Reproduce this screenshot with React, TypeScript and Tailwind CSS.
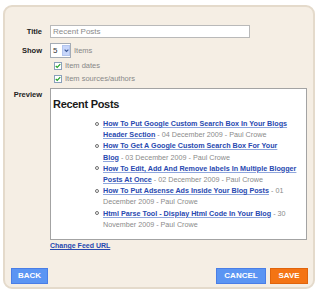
const posts = [
  { line1: 'How To Put Google Custom Search Box In Your Blogs', link2: 'Header Section', rest2: ' - 04 December 2009 - Paul Crowe' },
  { line1: 'How To Get A Google Custom Search Box For Your', link2: 'Blog', rest2: ' - 03 December 2009 - Paul Crowe' },
  { line1: 'How To Edit, Add And Remove labels In Multiple Blogger', link2: 'Posts At Once', rest2: ' - 02 December 2009 - Paul Crowe' },
  { line1: 'How To Put Adsense Ads Inside Your Blog Posts', tail1: ' - 01', rest2: 'December 2009 - Paul Crowe' },
  { line1: 'Html Parse Tool - Display Html Code In Your Blog', tail1: ' - 30', rest2: 'November 2009 - Paul Crowe' },
];

const CheckBox = () => (
  <span className="flex h-[8px] w-[8px] items-center justify-center border border-[#8aa0bb] bg-white">
    <svg viewBox="0 0 8 8" className="h-[6px] w-[6px]">
      <path d="M1 4 L3 6 L7 1.5" fill="none" stroke="#22a22a" strokeWidth="1.6" />
    </svg>
  </span>
);

const linkCls = 'font-bold text-[#2849b0] underline decoration-[#8fa6dc]';

const App = () => {
  return (
    <div className="h-[296px] w-[320px] bg-white pl-[3px] pt-[5px]" style={{ fontFamily: '"Liberation Sans", Arial, sans-serif' }}>
      <div className="flex h-[284px] w-[312px] flex-col rounded-[9px] border-2 border-[#e4dacb] bg-[#f5eee4]">
        {/* Settings form */}
        <div className="mt-[18px] grid grid-cols-[37px_1fr] gap-x-[8px]">
          <div className="flex h-[13px] items-center justify-end text-[7.5px] font-bold text-[#222]">Title</div>
          <div className="flex h-[13px] w-[200px] items-center border border-[#b9b9b9] bg-white pl-[2px] text-[8px] text-[#8a8a8a]">
            Recent Posts
          </div>

          <div className="mt-[5px] flex h-[15px] items-start justify-end pt-[2px] text-[7.5px] font-bold text-[#222]">Show</div>
          <div className="mt-[5px] flex h-[15px] items-center gap-[3px]">
            <div className="flex h-[15px] w-[21px] items-center border border-[#a5acb5] bg-white">
              <span className="w-[11px] pl-[2px] text-[8px] text-[#333]">5</span>
              <span className="flex h-[11px] w-[8px] items-center justify-center border border-[#b3c5ee] bg-[#c7d6fa]">
                <svg viewBox="0 0 8 8" className="h-[5px] w-[5px]">
                  <path d="M1 2.5 L4 5.5 L7 2.5" fill="none" stroke="#3e5a98" strokeWidth="1.8" />
                </svg>
              </span>
            </div>
            <span className="text-[7.5px] text-[#888]">Items</span>
          </div>

          <div />
          <div className="mt-[3px] flex h-[9px] items-center gap-[3px] pl-[4px]">
            <CheckBox />
            <span className="text-[7.5px] text-[#888]">Item dates</span>
          </div>

          <div />
          <div className="mt-[4px] flex h-[9px] items-center gap-[3px] pl-[4px]">
            <CheckBox />
            <span className="text-[7.5px] text-[#888]">Item sources/authors</span>
          </div>

          <div className="mt-[5px] flex justify-end pt-[2px] text-[7.5px] font-bold leading-[10px] text-[#222]">Preview</div>
          <div className="mt-[5px] h-[152px] w-[257px] border border-[#a3a3a3] bg-white pl-[2px] pt-[9px]">
            <div className="text-[11px] font-bold leading-[13px] tracking-[-0.3px] text-[#1a1a1a]">Recent Posts</div>
            <div className="mt-[7px] flex flex-col text-[7.2px] leading-[11.2px] text-[#8a8a8a]">
              {posts.map(post => (
                <div key={post.line1} className="flex">
                  <div className="ml-[42px] mr-[4px] flex h-[11.2px] items-center">
                    <span className="h-[4px] w-[4px] rounded-full border border-[#6f6f6f]" />
                  </div>
                  <div className="flex flex-col whitespace-nowrap">
                    <div>
                      <span className={linkCls}>{post.line1}</span>
                      {post.tail1}
                    </div>
                    <div>
                      {post.link2 && <span className={linkCls}>{post.link2}</span>}
                      {post.rest2}
                    </div>
                  </div>
                </div>
              ))}
            </div>
          </div>

          <div />
          <div className="mt-[1px] text-[7px] font-bold leading-[9px]">
            <span className="text-[#2849b0] underline">Change Feed URL</span>
          </div>
        </div>

        {/* Buttons */}
        <div className="mt-[18px] flex items-center pl-[6px] pr-[5px]">
          <button className="flex h-[16px] w-[37px] items-center justify-center border border-[#4a7ee6] bg-[#5b95f3] text-[8px] font-bold text-white">
            BACK
          </button>
          <div className="ml-auto flex gap-[4px]">
            <button className="flex h-[16px] w-[50px] items-center justify-center border border-[#4a7ee6] bg-[#5b95f3] text-[8px] font-bold text-white">
              CANCEL
            </button>
            <button className="flex h-[16px] w-[38px] items-center justify-center border border-[#e0640c] bg-[#f47414] text-[8px] font-bold text-white">
              SAVE
            </button>
          </div>
        </div>
      </div>
    </div>
  );
};

export default App;
